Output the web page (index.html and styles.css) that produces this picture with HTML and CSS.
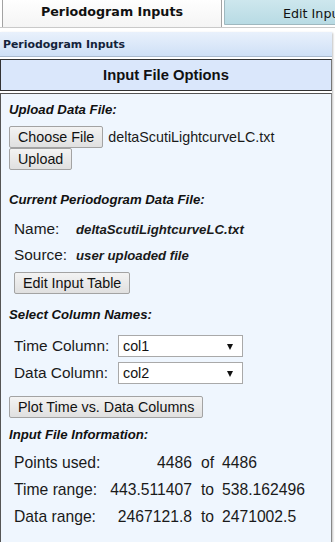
FILE: index.html
```html
<!DOCTYPE html>
<html lang="en">
<head>
    <meta charset="UTF-8">
    <meta name="viewport" content="width=device-width, initial-scale=1.0">
    <title>Periodogram Inputs</title>
    <link rel="stylesheet" href="styles.css">
</head>
<body>
    <!-- Tab strip -->
    <div class="tabs">
        <div class="tab tab-active">Periodogram Inputs</div>
        <div class="tab tab-other">Edit Input Table</div>
    </div>

    <div class="panel">
        <div class="panel-title">Periodogram Inputs</div>

        <div class="box-head">Input File Options</div>

        <div class="box-body">
            <h4 class="sub-head">Upload Data File:</h4>
            <div class="file-row">
                <button class="btn">Choose File</button>
                <span class="file-name">deltaScutiLightcurveLC.txt</span>
            </div>
            <button class="btn">Upload</button>

            <h4 class="sub-head head-current">Current Periodogram Data File:</h4>
            <div class="file-info">
                <span>Name:</span>
                <span class="file-value">deltaScutiLightcurveLC.txt</span>
                <span>Source:</span>
                <span class="file-value">user uploaded file</span>
            </div>
            <button class="btn btn-indent">Edit Input Table</button>

            <h4 class="sub-head head-columns">Select Column Names:</h4>
            <div class="column-select">
                <label for="timeCol">Time Column:</label>
                <div class="select-wrap">
                    <select id="timeCol">
                        <option>col1</option>
                        <option>col2</option>
                    </select>
                </div>
                <label for="dataCol">Data Column:</label>
                <div class="select-wrap">
                    <select id="dataCol">
                        <option>col2</option>
                        <option>col1</option>
                    </select>
                </div>
            </div>
            <button class="btn btn-plot">Plot Time vs. Data Columns</button>

            <h4 class="sub-head head-info">Input File Information:</h4>
            <div class="stats">
                <span>Points used:</span>
                <span class="num">4486</span>
                <span class="mid">of</span>
                <span>4486</span>

                <span>Time range:</span>
                <span class="num">443.511407</span>
                <span class="mid">to</span>
                <span>538.162496</span>

                <span>Data range:</span>
                <span class="num">2467121.8</span>
                <span class="mid">to</span>
                <span>2471002.5</span>
            </div>
        </div>
    </div>
</body>
</html>
```

FILE: styles.css
```css
/* General */
body {
    margin: 0;
    padding: 0;
    background: #fff;
    font-family: "Liberation Sans", Arial, sans-serif;
    color: #1a1a1a;
    width: 335px;
    height: 542px;
    overflow: hidden;
}

h4 {
    margin: 0;
}

/* Tab strip */
.tabs {
    display: flex;
    align-items: flex-start;
    height: 27px;
    border-bottom: 1px solid #c9c9c9;
    overflow: hidden;
    font-family: "DejaVu Sans", Verdana, sans-serif;
}

.tab {
    flex: none;
    box-sizing: border-box;
    margin-top: -3px;
    border: 1px solid #a3a3a3;
    border-radius: 4px 4px 0 0;
    color: #111;
    white-space: nowrap;
}

.tab-active {
    margin-left: 2px;
    width: 220px;
    height: 31px;
    border-bottom: none;
    background: linear-gradient(#ffffff, #f4f4f4);
    font-weight: bold;
    font-size: 12.7px;
    text-align: center;
    line-height: 28px;
}

.tab-other {
    margin-left: 2px;
    width: 220px;
    height: 28px;
    background: linear-gradient(#cfe8ee, #b8dbe4);
    font-size: 12.7px;
    padding-left: 58px;
    line-height: 32px;
    border-color: #9fb8bf;
}

/* Panel */
.panel {
    width: 332px;
    margin-top: 4px;
    box-shadow: 1px 1px 2px rgba(0, 0, 0, 0.25);
}

.panel-title {
    height: 24px;
    border-bottom: 1px solid #a9b9cd;
    background: linear-gradient(#e9f1fc, #cfe0f6);
    font-family: "DejaVu Sans", Verdana, sans-serif;
    font-weight: bold;
    font-size: 10.9px;
    line-height: 26px;
    padding-left: 3px;
    color: #14233a;
}

.box-head {
    margin-top: 2px;
    height: 30px;
    border: 1px solid #333;
    border-right-color: #777;
    background: #dae7fb;
    text-align: center;
    font-weight: bold;
    font-size: 14.8px;
    line-height: 31px;
    color: #111;
}

.box-body {
    margin-top: 2px;
    height: 445px;
    border: 1px solid #555;
    border-right-color: #888;
    border-bottom-color: #aaa;
    background: #eff6fe;
    padding: 8px 0 0 8px;
}

.sub-head {
    font-size: 13.2px;
    font-style: italic;
    font-weight: bold;
    line-height: 16px;
    color: #111;
}

.head-current {
    margin-top: 22px;
}

.head-columns {
    margin-top: 13px;
}

.head-info {
    margin-top: 9px;
}

/* Buttons */
.btn {
    display: block;
    box-sizing: border-box;
    height: 22px;
    padding: 0 8px;
    border: 1px solid #a3a3a3;
    border-radius: 2px;
    background: linear-gradient(#f3f3f3, #e0e0e0);
    font-family: "Liberation Sans", Arial, sans-serif;
    font-size: 14.3px;
    color: #111;
    white-space: nowrap;
}

.file-row {
    display: flex;
    align-items: center;
    margin-top: 8px;
}

.file-name {
    margin-left: 5px;
    font-size: 14.3px;
    line-height: 22px;
}

/* Current file */
.file-info {
    display: grid;
    grid-template-columns: 62px auto;
    grid-auto-rows: 26px;
    align-items: center;
    margin: 8px 0 0 5px;
    font-size: 15.4px;
}

.file-value {
    font-size: 13.2px;
    font-weight: bold;
    font-style: italic;
}

.btn-indent {
    margin: 4px 0 0 5px;
}

/* Column selects */
.column-select {
    display: grid;
    grid-template-columns: 104px 125px;
    row-gap: 5px;
    align-items: center;
    margin: 12px 0 0 5px;
    font-size: 15.4px;
}

.select-wrap {
    position: relative;
    height: 22px;
}

.select-wrap select {
    appearance: none;
    -webkit-appearance: none;
    box-sizing: border-box;
    width: 125px;
    height: 22px;
    border: 1px solid #a9a9a9;
    border-radius: 0;
    background: #fff;
    padding: 0 0 0 4px;
    font-family: "Liberation Sans", Arial, sans-serif;
    font-size: 14.3px;
    color: #111;
}

.select-wrap::after {
    content: "";
    position: absolute;
    right: 10px;
    top: 9px;
    border-left: 3.5px solid transparent;
    border-right: 3.5px solid transparent;
    border-top: 6px solid #111;
    pointer-events: none;
}

.btn-plot {
    margin-top: 12px;
}

/* Input file information */
.stats {
    display: grid;
    grid-template-columns: 94px 84px 30px auto;
    grid-auto-rows: 27px;
    align-items: center;
    margin: 6px 0 0 5px;
    font-size: 15.7px;
    white-space: nowrap;
}

.stats .num {
    text-align: right;
}

.stats .mid {
    padding-left: 9px;
}
```
